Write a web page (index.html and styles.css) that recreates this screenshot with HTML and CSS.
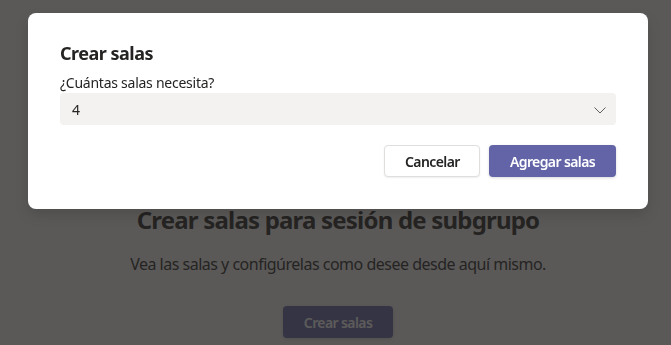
FILE: index.html
```html
<!DOCTYPE html>
<html lang="es">
<head>
  <meta charset="UTF-8" />
  <meta name="viewport" content="width=device-width, initial-scale=1.0"/>
  <title>Crear salas</title>
  <link rel="stylesheet" href="styles.css">
</head>
<body>

  <div class="page">
    <h1 class="page-title">Crear salas para sesión de subgrupo</h1>
    <p class="page-text">Vea las salas y configúrelas como desee desde aquí mismo.</p>
    <button class="btn btn-primary page-btn">Crear salas</button>
  </div>

  <div class="overlay"></div>

  <div class="dialog" role="dialog">
    <h2 class="dialog-title">Crear salas</h2>
    <label class="field-label" for="roomCount">¿Cuántas salas necesita?</label>
    <div class="select" id="roomCount">
      <span>4</span>
      <svg class="chevron" width="16" height="16" viewBox="0 0 16 16">
        <path d="M2.5 5.5 L8 11 L13.5 5.5" fill="none" stroke="#605e5c" stroke-width="1"/>
      </svg>
    </div>
    <div class="dialog-actions">
      <button class="btn btn-default">Cancelar</button>
      <button class="btn btn-primary btn-wide">Agregar salas</button>
    </div>
  </div>

</body>
</html>
```

FILE: styles.css
```css
body {
  margin: 0;
  background: #f5f5f5;
  font-family: "Noto Sans", "Open Sans", sans-serif;
  color: #252423;
  height: 100vh;
  overflow: hidden;
}
.page {
  display: flex;
  flex-direction: column;
  align-items: center;
  padding-top: 204px;
  padding-left: 5px;
}
.page-title {
  margin: 0;
  font-size: 24px;
  line-height: 32px;
  font-weight: 700;
  letter-spacing: -0.8px;
}
.page-text {
  margin: 17px 0 0;
  font-size: 16px;
  line-height: 22px;
  letter-spacing: -0.5px;
}
.page-btn {
  margin-top: 31px;
  width: 110px;
  padding: 0;
  white-space: nowrap;
}
.overlay {
  position: fixed;
  inset: 0;
  background: rgba(37, 36, 35, 0.75);
}
.dialog {
  position: fixed;
  left: 28px;
  top: 13px;
  width: 620px;
  box-sizing: border-box;
  padding: 27px 32px 32px;
  background: #fff;
  border-radius: 8px;
  box-shadow: 0 6px 14px rgba(0,0,0,0.13);
}
.dialog-title {
  margin: 0;
  font-size: 18px;
  line-height: 26px;
  font-weight: 700;
  letter-spacing: -0.5px;
}
.field-label {
  display: block;
  margin-top: 7px;
  font-size: 14px;
  line-height: 20px;
  letter-spacing: -0.25px;
}
.select {
  height: 32px;
  box-sizing: border-box;
  padding: 0 8px 0 12px;
  background: #f3f2f1;
  border-radius: 4px;
  display: flex;
  align-items: center;
  justify-content: space-between;
  font-size: 14px;
}
.chevron {
  margin-top: 1px;
}
.dialog-actions {
  display: flex;
  justify-content: flex-end;
  gap: 9px;
  margin-top: 20px;
}
.btn {
  height: 32px;
  border-radius: 4px;
  font-family: inherit;
  font-size: 14px;
  font-weight: 600;
  letter-spacing: -0.6px;
  padding: 0 20px;
  cursor: pointer;
}
.btn-default {
  width: 96px;
  background: #fff;
  color: #252423;
  border: 1px solid #e1dfdd;
  box-shadow: 0 1px 2px rgba(0,0,0,0.07);
}
.btn-primary {
  min-width: 96px;
  background: #6264a7;
  color: #fff;
  border: none;
  box-shadow: 0 1px 3px rgba(0,0,0,0.15);
}
.btn-wide {
  width: 127px;
  padding: 0;
}
```
